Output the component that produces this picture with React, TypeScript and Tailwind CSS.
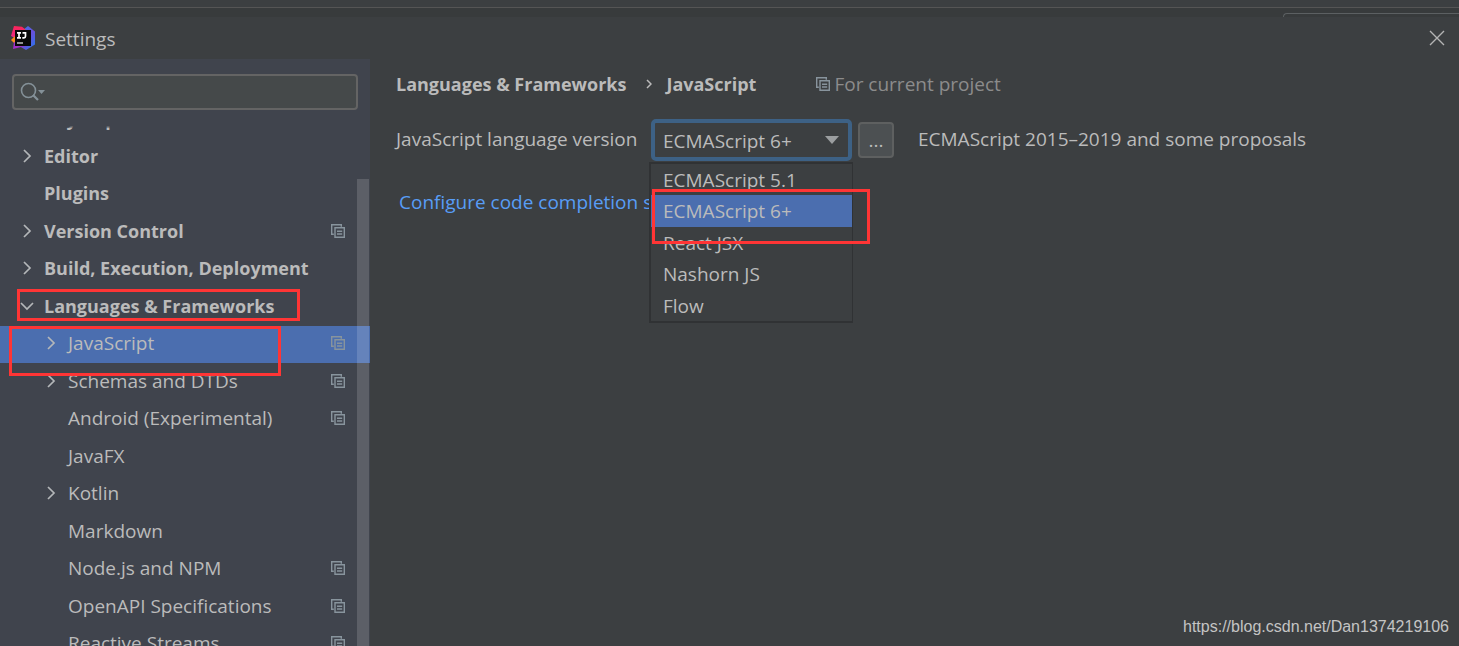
import { useState } from "react";
import clsx from "clsx";

type TreeItem = {
  label: string;
  level: 0 | 1;
  arrow?: "right" | "down";
  project?: boolean;
  marked?: "group" | "item";
};

const treeItems: TreeItem[] = [
  { label: "Editor", level: 0, arrow: "right" },
  { label: "Plugins", level: 0 },
  { label: "Version Control", level: 0, arrow: "right", project: true },
  { label: "Build, Execution, Deployment", level: 0, arrow: "right" },
  { label: "Languages & Frameworks", level: 0, arrow: "down", marked: "group" },
  { label: "JavaScript", level: 1, arrow: "right", project: true, marked: "item" },
  { label: "Schemas and DTDs", level: 1, arrow: "right", project: true },
  { label: "Android (Experimental)", level: 1, project: true },
  { label: "JavaFX", level: 1 },
  { label: "Kotlin", level: 1, arrow: "right" },
  { label: "Markdown", level: 1 },
  { label: "Node.js and NPM", level: 1, project: true },
  { label: "OpenAPI Specifications", level: 1, project: true },
  { label: "Reactive Streams", level: 1, project: true },
];

const versions = ["ECMAScript 5.1", "ECMAScript 6+", "React JSX", "Nashorn JS", "Flow"];

function ProjectIcon() {
  return (
    <svg width="14" height="14" viewBox="0 0 14 14" fill="none" stroke="#88949d" strokeWidth="1.4" className="shrink-0">
      <path d="M2.8 10.2H.7V.7h9.6v2" />
      <path d="M4 3.7h9.3v9.6H4z" />
      <path d="M6 7.2h5.2M6 10h5.2" />
    </svg>
  );
}

function Chevron({ direction }: { direction: "right" | "down" }) {
  return (
    <svg width="14" height="14" viewBox="0 0 14 14" fill="none" stroke="#b4b7b9" strokeWidth="1.7" className="shrink-0">
      <path d={direction === "right" ? "M4 1l6 6-6 6" : "M1 4l6 6 6-6"} />
    </svg>
  );
}

function AppLogo() {
  return (
    <svg width="24" height="24" viewBox="0 0 24 24" aria-hidden="true">
      <defs>
        <linearGradient id="logo-blue" x1="0" y1="0" x2="1" y2="1">
          <stop offset="0" stopColor="#2f80f0" />
          <stop offset=".55" stopColor="#6a4fd8" />
          <stop offset="1" stopColor="#1e7cf2" />
        </linearGradient>
        <linearGradient id="logo-pink" x1="0" y1="0" x2="0" y2="1">
          <stop offset="0" stopColor="#fb2458" />
          <stop offset="1" stopColor="#e92d8d" />
        </linearGradient>
      </defs>
      <path d="M12 4l5-4 7 5.500v13L15 24l-7-4z" fill="url(#logo-blue)" />
      <path d="M3 0l8 .8 4 3.200-9 9-6-3z" fill="url(#logo-pink)" />
      <path d="M0 14l4-4v8z" fill="#fc8a1c" />
      <path d="M3 16l11 4-4 1-8 2z" fill="#a22fc8" />
      <rect x="4" y="4" width="16" height="16" fill="#090909" />
      <path d="M6 6.800h4M8 6.800v5M6 11.800h4M11.500 6.800h3v3.500q0 1.500-1.500 1.500h-1.700" fill="none" stroke="#fff" strokeWidth="1.700" />
      <path d="M6 17h6" stroke="#ddd" strokeWidth="1.300" />
    </svg>
  );
}

function TreeRow({ item, selected, onSelect }: { item: TreeItem; selected: boolean; onSelect: () => void }) {
  return (
    <li className={clsx("relative shrink-0 odd:h-[38px] even:h-[37px]", selected && "bg-[#4b6eaf]")}>
      <button
        type="button"
        onClick={onSelect}
        className={clsx(
          "flex h-full w-full items-center gap-[10px] pr-[25px] pb-[3px] text-left",
          item.level === 0 ? "pl-5 text-[18px] font-bold" : "pl-11"
        )}
      >
        {item.arrow ? <Chevron direction={item.arrow} /> : <span className="w-[14px]" />}
        <span className="flex-1 whitespace-nowrap">{item.label}</span>
        {item.project && <ProjectIcon />}
      </button>
      {item.marked === "group" && (
        <span className="pointer-events-none absolute top-px left-[17px] z-10 h-8 w-[283px] border-3 border-[#ff3535]" />
      )}
      {item.marked === "item" && (
        <span className="pointer-events-none absolute top-0 left-[9px] z-10 h-[50px] w-[272px] border-3 border-[#ff3535]" />
      )}
    </li>
  );
}

function Sidebar() {
  const [selected, setSelected] = useState("JavaScript");

  return (
    <aside className="flex w-[370px] shrink-0 flex-col bg-[#40444d]">
      <div className="px-3 pt-[15px]">
        <label className="flex h-9 items-center rounded-[4px] border-2 border-[#646464] bg-[#45494a] pl-1">
          <svg width="28" height="22" viewBox="0 0 28 22" fill="none" stroke="#849198" strokeWidth="1.600">
            <circle cx="10.500" cy="9.500" r="7" />
            <path d="M15 14l5 5" strokeWidth="2.200" />
            <path d="M20 9h7l-3.500 4z" fill="#849198" stroke="none" />
          </svg>
          <input type="text" aria-label="Search settings" className="min-w-0 flex-1 bg-transparent outline-none" />
        </label>
      </div>
      <div className="relative mt-[14px] flex min-h-0 flex-1 flex-col overflow-hidden">
        <div className="-mt-6 flex h-[38px] shrink-0 items-center pl-11 text-[18px] font-bold">Keymap</div>
        <div className="absolute inset-x-0 top-0 h-1 bg-linear-to-b from-[#40444d] from-40% to-[#40444d]/30" />
        <ul className="flex flex-col">
          {treeItems.map((item) => (
            <TreeRow
              key={item.label}
              item={item}
              selected={selected === item.label}
              onSelect={() => setSelected(item.label)}
            />
          ))}
        </ul>
        <div className="absolute top-[55px] right-px bottom-0 w-3 bg-white/15" />
      </div>
    </aside>
  );
}

function VersionSelect() {
  const [version, setVersion] = useState("ECMAScript 6+");

  return (
    <div className="relative">
      <select
        id="version"
        value={version}
        onChange={(e) => setVersion(e.target.value)}
        className="block h-[42px] w-[201px] appearance-none rounded-[5px] border-4 border-[#3d6185] bg-[#3c3f41] pt-px pl-2 outline-none"
      >
        {versions.map((v) => (
          <option key={v}>{v}</option>
        ))}
      </select>
      <svg width="14" height="8" viewBox="0 0 14 8" className="pointer-events-none absolute top-[17px] right-[13px]">
        <path d="M0 0h14L7 8z" fill="#9b9ea0" />
      </svg>
      <ul className="absolute top-[43px] -left-0.5 z-10 w-[204px] border-2 border-r border-[#303234] bg-[#3c3f41]">
        {versions.map((v) => (
          <li
            key={v}
            onClick={() => setVersion(v)}
            className={clsx("flex items-center pl-3 odd:h-[31px] even:h-8", v === version && "bg-[#4b6eaf]")}
          >
            {v}
          </li>
        ))}
      </ul>
      <span className="pointer-events-none absolute top-[70px] left-px z-20 h-[55px] w-[218px] border-3 border-[#ff3535]" />
    </div>
  );
}

export default function App() {
  return (
    <div className="flex h-screen flex-col overflow-hidden bg-[#3c3f41] font-['Open_Sans',sans-serif] text-[19px] leading-6 text-[#bbbbbb]">
      <div className="h-2 shrink-0 border-b border-[#555555]" />
      <div className="flex h-[9px] shrink-0 items-end justify-end bg-[#383b3c]">
        <div className="h-1 w-44 rounded-tl-[4px] border-t border-l border-[#5c6062]" />
      </div>

      <header className="flex h-[42px] shrink-0 items-center gap-[10px] pr-[14px] pl-[11px]">
        <AppLogo />
        <h1 className="flex-1 pt-0.5">Settings</h1>
        <button type="button" aria-label="Close">
          <svg width="16" height="16" viewBox="0 0 16 16" stroke="#b4b4b4" strokeWidth="1.400">
            <path d="M1 1l14 14M15 1L1 15" />
          </svg>
        </button>
      </header>

      <div className="flex min-h-0 flex-1">
        <Sidebar />
        <main className="flex min-w-0 flex-1 flex-col pt-[13px] pl-[26px]">
          <div className="flex items-center whitespace-nowrap">
            <h2 className="flex items-center text-[18px] font-bold">
              Languages &amp; Frameworks
              <svg width="6" height="10" viewBox="0 0 6 10" fill="none" stroke="#bbbbbb" strokeWidth="1.500" className="mr-[14px] ml-5">
                <path d="M1 1l4 4-4 4" />
              </svg>
              JavaScript
            </h2>
            <div className="ml-[60px] flex items-center gap-1 text-[#8c8c8c]">
              <ProjectIcon />
              For current project
            </div>
          </div>

          <div className="mt-[23px] flex items-center whitespace-nowrap">
            <label htmlFor="version" className="w-[255px] pb-0.5">
              JavaScript language version
            </label>
            <VersionSelect />
            <button
              type="button"
              className="ml-[6px] h-9 w-9 rounded-[4px] border-2 border-[#5e6060] bg-[#4c5052]"
            >
              ...
            </button>
            <span className="ml-6 pb-0.5">ECMAScript 2015–2019 and some proposals</span>
          </div>

          <a href="#completion" className="mt-[29px] ml-[3px] w-[250px] overflow-hidden whitespace-nowrap text-[#589df6]">
            Configure code completion settings
          </a>

          <footer className="mt-auto pr-[10px] pb-[7px] text-right font-['Liberation_Sans',sans-serif] text-[16px] text-[#c4c4c4]">
            https://blog.csdn.net/Dan1374219106
          </footer>
        </main>
      </div>
    </div>
  );
}
